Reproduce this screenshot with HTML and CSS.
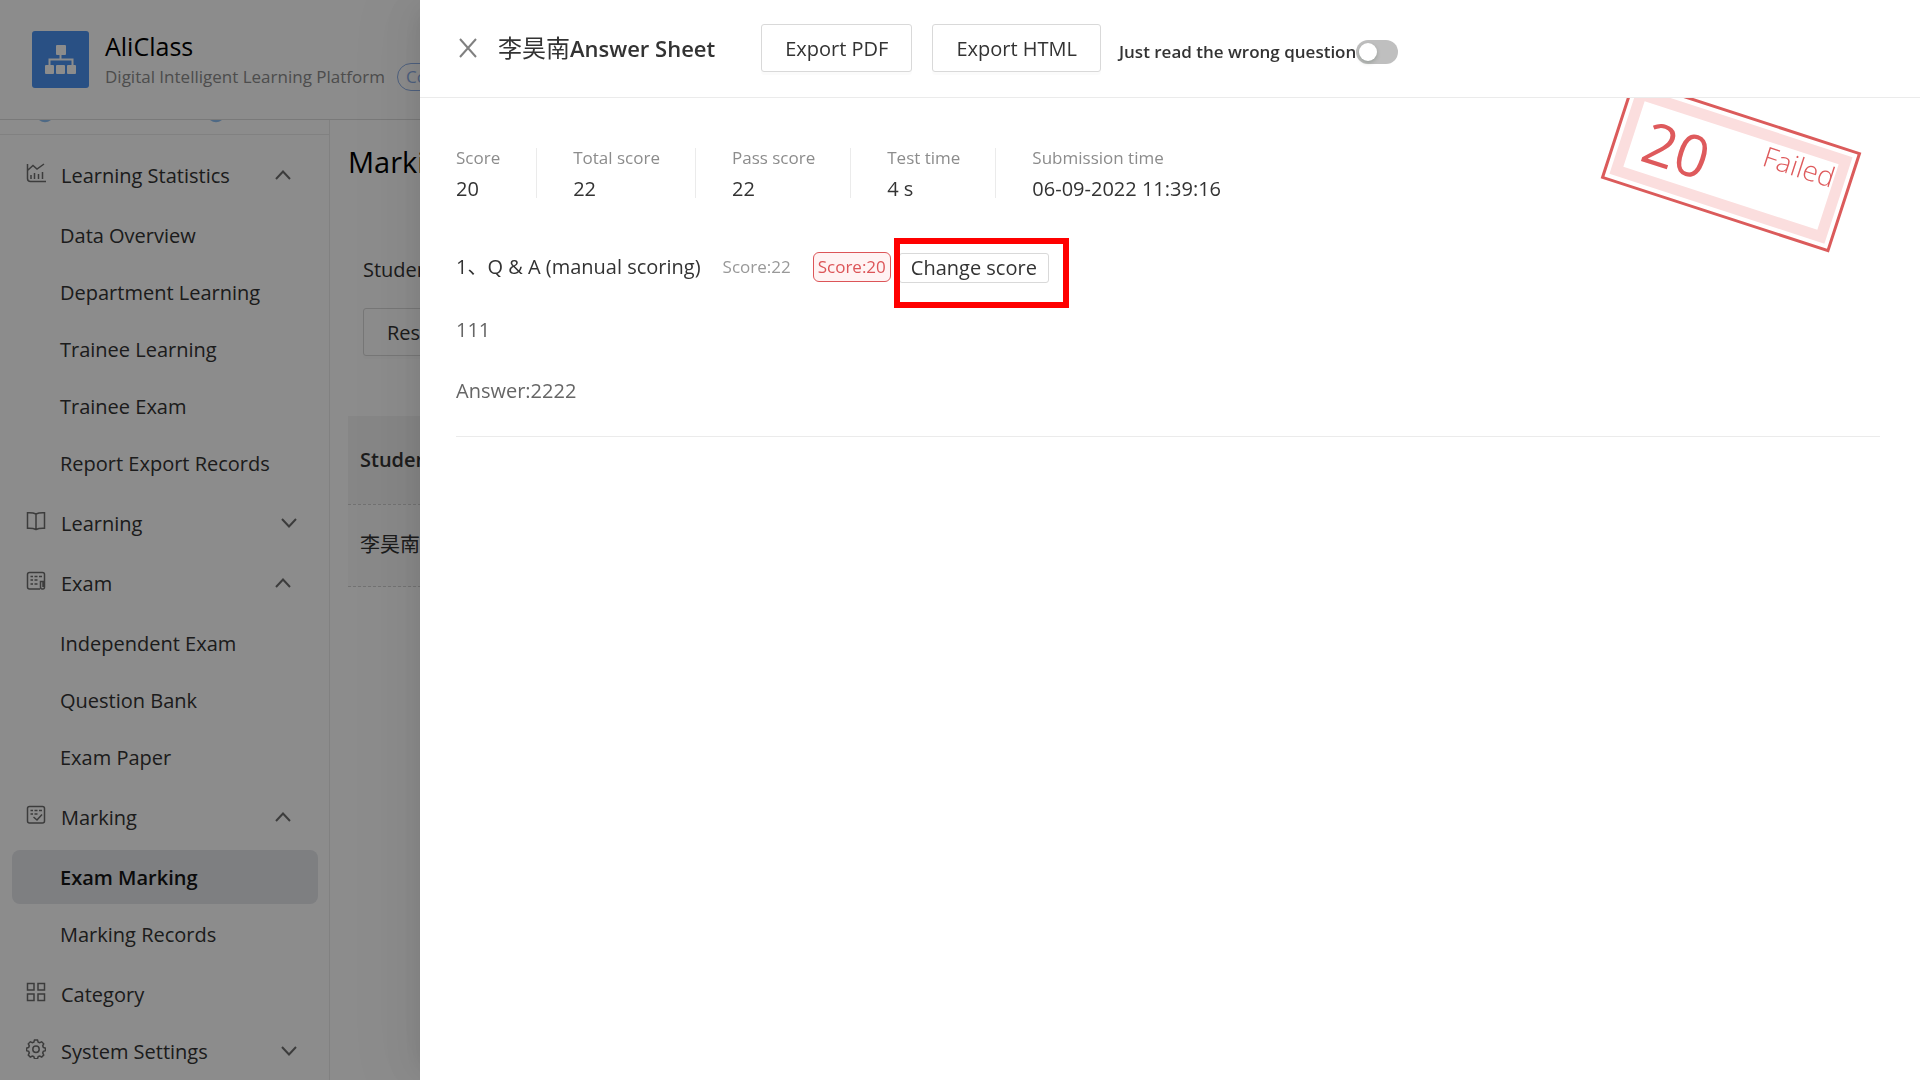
FILE: index.html
```html
<!DOCTYPE html>
<html lang="en">
<head>
    <meta charset="UTF-8">
    <meta name="viewport" content="width=device-width, initial-scale=1.0">
    <title>AliClass - Exam Marking</title>
    <link rel="stylesheet" href="styles.css">
</head>
<body>
<div class="app">
    <header class="topbar">
        <svg class="logo" viewBox="0 0 57 57" aria-hidden="true">
            <rect width="57" height="57" rx="3" fill="#4b92f0"/>
            <g fill="#fff">
                <rect x="24" y="14" width="10" height="10" rx="1"/>
                <rect x="13" y="34" width="9" height="9" rx="1"/>
                <rect x="24" y="34" width="9" height="9" rx="1"/>
                <rect x="35" y="34" width="9" height="9" rx="1"/>
            </g>
            <path d="M28.500 23v5M17.500 35v-6.500h23V35" fill="none" stroke="#fff" stroke-width="2"/>
        </svg>
        <div class="brand">
            <div class="brand-name">AliClass</div>
            <div class="brand-sub">
                <span>Digital Intelligent Learning Platform</span>
                <span class="badge">Corporate</span>
            </div>
        </div>
    </header>

    <div class="layout">
        <nav class="sidebar">
            <div class="shortcuts">
                <svg viewBox="0 0 12 3" aria-hidden="true"><path d="M0 0h12Q6 4.500 0 0z" fill="#8fc0f2"/></svg>
                <svg viewBox="0 0 12 3" aria-hidden="true"><path d="M0 0h12Q6 4.500 0 0z" fill="#8fc0f2"/></svg>
            </div>
            <ul class="menu">
                <li>
                    <button type="button" class="menu-title open">
                        <svg class="icon" viewBox="0 0 20 20"><path d="M1.500 1v14.500q0 3 3 3H20M2 7l5-4.500 4 3.500 7-5M5 16v-4M8.500 16v-6M12.500 16v-5M16.500 16V9"/></svg>
                        <span>Learning Statistics</span>
                        <svg class="chevron" viewBox="0 0 16 10"><path d="M1 9l7-7.500L15 9"/></svg>
                    </button>
                    <ul class="submenu">
                        <li><a href="#">Data Overview</a></li>
                        <li><a href="#">Department Learning</a></li>
                        <li><a href="#">Trainee Learning</a></li>
                        <li><a href="#">Trainee Exam</a></li>
                        <li><a href="#">Report Export Records</a></li>
                    </ul>
                </li>
                <li>
                    <button type="button" class="menu-title closed">
                        <svg class="icon" viewBox="0 0 20 20"><path d="M10 3q-3-1.500-8.500-1.200v15.500q5.500-.3 8.500 1.200 3-1.500 8.500-1.200V1.800Q13 1.500 10 3zM10 3v15"/></svg>
                        <span>Learning</span>
                        <svg class="chevron" viewBox="0 0 16 10"><path d="M1 1l7 7.500L15 1"/></svg>
                    </button>
                </li>
                <li>
                    <button type="button" class="menu-title open">
                        <svg class="icon" viewBox="0 0 20 20"><path d="M14 18H3.500q-2 0-2-2V3.500q0-2 2-2h13q2 0 2 2V16q0 2-1.500 2h-1q-1.500 0-1.500-2v-5.500h2.500V16M4.500 5.500h2.500M8.500 5.500h3M13 5.500h3M4.500 9h2.500M8.500 9h3M4.500 13h2.500M8.500 13h3"/></svg>
                        <span>Exam</span>
                        <svg class="chevron" viewBox="0 0 16 10"><path d="M1 9l7-7.500L15 9"/></svg>
                    </button>
                    <ul class="submenu">
                        <li><a href="#">Independent Exam</a></li>
                        <li><a href="#">Question Bank</a></li>
                        <li><a href="#">Exam Paper</a></li>
                    </ul>
                </li>
                <li>
                    <button type="button" class="menu-title open">
                        <svg class="icon" viewBox="0 0 20 20"><path d="M3.500 1.500h13q2 0 2 2v12.500q0 2-2 2h-13q-2 0-2-2V3.500q0-2 2-2zM4.500 5.500h2.500M8.500 5.500h3M13 5.500h3M4.500 9h2.500M8.500 9h3M7.500 12l3.500 3 5-5.500"/></svg>
                        <span>Marking</span>
                        <svg class="chevron" viewBox="0 0 16 10"><path d="M1 9l7-7.500L15 9"/></svg>
                    </button>
                    <ul class="submenu">
                        <li><a href="#" class="active">Exam Marking</a></li>
                        <li><a href="#">Marking Records</a></li>
                    </ul>
                </li>
                <li>
                    <a href="#" class="menu-title single">
                        <svg class="icon" viewBox="0 0 20 20"><path d="M1.500 1.500h6.500v6.500H1.500zM12 1.500h6.500v6.500H12zM1.500 12h6.500v6.500H1.500zM12 12h6.500v6.500H12z"/></svg>
                        <span>Category</span>
                    </a>
                </li>
                <li>
                    <button type="button" class="menu-title closed">
                        <svg class="icon" viewBox="0 0 20 20"><path d="M8.500 1h3l.7 2.200 1.400.6 2.100-1 2 2-1 2.100.6 1.500 2.200.8v2.400l-2.200.8-.6 1.500 1 2.100-2 2-2.100-1-1.400.6-.7 2.200h-3l-.7-2.200-1.400-.6-2.100 1-2-2 1-2.100-.6-1.500L.5 11.600V9.200l2.200-.8.6-1.500-1-2.100 2-2 2.100 1 1.400-.6z"/><circle cx="10" cy="10.300" r="3.200"/></svg>
                        <span>System Settings</span>
                        <svg class="chevron" viewBox="0 0 16 10"><path d="M1 1l7 7.500L15 1"/></svg>
                    </button>
                </li>
            </ul>
        </nav>

        <main class="content">
            <h1>Marking</h1>
            <div class="filters">
                <span class="filter-label">Student</span>
                <button type="button" class="btn">Reset</button>
            </div>
            <table class="list">
                <thead>
                <tr><th>Student</th></tr>
                </thead>
                <tbody>
                <tr><td>李昊南</td></tr>
                </tbody>
            </table>
        </main>
    </div>
</div>

<div class="mask"></div>

<section class="drawer" role="dialog" aria-labelledby="drawerTitle">
    <header class="drawer-header">
        <button type="button" class="close" aria-label="Close">
            <svg viewBox="0 0 18 20"><path d="M1 1l16 18M17 1L1 19"/></svg>
        </button>
        <h2 id="drawerTitle"><span class="student">李昊南</span>Answer Sheet</h2>
        <div class="actions">
            <button type="button" class="btn">Export PDF</button>
            <button type="button" class="btn">Export HTML</button>
        </div>
        <div class="toggle">
            <label for="wrongOnly">Just read the wrong question</label>
            <input type="checkbox" role="switch" id="wrongOnly" class="switch">
        </div>
    </header>

    <div class="drawer-body">
        <dl class="stats">
            <div><dt>Score</dt><dd>20</dd></div>
            <div><dt>Total score</dt><dd>22</dd></div>
            <div><dt>Pass score</dt><dd>22</dd></div>
            <div><dt>Test time</dt><dd>4 s</dd></div>
            <div><dt>Submission time</dt><dd>06-09-2022 11:39:16</dd></div>
        </dl>

        <div class="stamp">
            <div class="stamp-inner">
                <span class="stamp-score">20</span>
                <span class="stamp-result">Failed</span>
            </div>
        </div>

        <article class="question">
            <div class="question-head">
                <h3>1、Q &amp; A (manual scoring)</h3>
                <span class="full-score">Score:22</span>
                <span class="tag">Score:20</span>
                <div class="change">
                    <button type="button" class="btn-small">Change score</button>
                    <span class="highlight"></span>
                </div>
            </div>
            <p>111</p>
            <p>Answer:2222</p>
        </article>
    </div>
</section>
</body>
</html>
```
FILE: styles.css
```css
* {
    box-sizing: border-box;
}
body {
    margin: 0;
    height: 100vh;
    overflow: hidden;
    background: #fff;
    color: #333;
    font-family: "Open Sans", "Noto Sans CJK SC", sans-serif;
    font-size: 20px;
    line-height: 30px;
}
button {
    font: inherit;
    color: inherit;
    cursor: pointer;
}
h1, h2, h3, p, dl, dd, ul {
    margin: 0;
    padding: 0;
}
ul {
    list-style: none;
}
a {
    color: inherit;
    text-decoration: none;
}
.app {
    display: flex;
    flex-direction: column;
    height: 100%;
}

/* top bar */
.topbar {
    display: flex;
    align-items: center;
    gap: 16px;
    flex: none;
    height: 120px;
    padding: 0 32px;
    border-bottom: 1px solid #dcdcdc;
}
.logo {
    width: 57px;
    height: 57px;
}
.brand-name {
    color: #000;
    font-size: 25px;
    line-height: 34px;
}
.brand-sub {
    display: flex;
    align-items: center;
    gap: 12px;
    color: #8c8c8c;
    font-size: 17px;
    line-height: 28px;
    white-space: nowrap;
}
.badge {
    padding: 0 8px;
    border: 1px solid #8fb0e8;
    border-radius: 14px;
    color: #8fb0e8;
    line-height: 26px;
}

/* sidebar */
.layout {
    display: flex;
    flex: 1;
    min-height: 0;
}
.sidebar {
    flex: none;
    width: 330px;
    overflow: hidden;
    border-right: 1px solid #ebebeb;
}
.shortcuts {
    display: flex;
    gap: 159px;
    height: 15px;
    padding-left: 39px;
    border-bottom: 1px solid #ebebeb;
}
.shortcuts svg {
    width: 12px;
    height: 3px;
}
.menu {
    padding: 13px 11px 0 12px;
}
.menu-title {
    display: flex;
    align-items: center;
    gap: 15px;
    width: 100%;
    height: 54px;
    margin-bottom: 6px;
    padding: 0 16px 0 14px;
    border: 0;
    background: none;
    text-align: left;
}
.menu-title span {
    flex: 1;
    padding-top: 1px;
}
.menu-title.open {
    padding-right: 27px;
}
.menu-title.closed {
    padding-right: 21px;
}
.menu-title.single {
    margin-bottom: 3px;
}
.icon {
    width: 20px;
    height: 20px;
    margin-bottom: 4px;
    fill: none;
    stroke: #6e6e6e;
    stroke-width: 1.500;
}
.chevron {
    width: 16px;
    height: 10px;
    fill: none;
    stroke: #6e6e6e;
    stroke-width: 2;
}
.submenu {
    padding-bottom: 3px;
}
.submenu a {
    display: block;
    height: 54px;
    margin-bottom: 3px;
    padding-left: 48px;
    border-radius: 8px;
    line-height: 56px;
}
.submenu .active {
    background: #e5e7ec;
    color: #141414;
    font-weight: 600;
}

/* page behind the drawer */
.content {
    flex: 1;
    padding: 20px 18px;
}
.content h1 {
    color: #000;
    font-size: 29px;
    font-weight: 400;
    line-height: 44px;
}
.filters {
    display: flex;
    flex-direction: column;
    align-items: flex-start;
    gap: 23px;
    padding: 71px 15px 60px;
}
.btn {
    height: 48px;
    padding: 2px 23px 0;
    border: 1px solid #d9d9d9;
    border-radius: 3px;
    background: #fff;
    box-shadow: 0 3px 0 rgba(0, 0, 0, 0.015);
    white-space: nowrap;
}
.list {
    width: 100%;
    border-collapse: collapse;
    background: #f9f9f9;
}
.list th,
.list td {
    padding: 0 12px;
    border-bottom: 1px dashed #d0d0d0;
    text-align: left;
}
.list th {
    height: 88px;
    background: #f4f4f4;
    font-weight: 600;
}
.list td {
    height: 82px;
}

/* overlay */
.mask {
    position: fixed;
    inset: 0;
    background: rgba(0, 0, 0, 0.45);
}
.drawer {
    position: fixed;
    top: 0;
    right: 0;
    bottom: 0;
    left: 420px;
    display: flex;
    flex-direction: column;
    background: #fff;
    box-shadow: -8px 0 22px -10px rgba(0, 0, 0, 0.08), -12px 0 40px rgba(0, 0, 0, 0.05), -16px 0 68px 22px rgba(0, 0, 0, 0.03);
}
.drawer-header {
    display: flex;
    align-items: center;
    flex: none;
    height: 98px;
    padding: 0 36px 2px;
    border-bottom: 1px solid #ebebeb;
}
.close {
    display: flex;
    margin-right: 18px;
    padding: 0 3px;
    border: 0;
    background: none;
}
.close svg {
    width: 18px;
    height: 20px;
    fill: none;
    stroke: #808080;
    stroke-width: 2;
}
.drawer-header h2 {
    font-size: 22px;
    font-weight: 600;
}
.student {
    font-size: 24px;
    font-weight: 400;
}
.actions {
    display: flex;
    gap: 20px;
    margin: 0 18px 0 46px;
}
.toggle {
    display: flex;
    align-items: center;
    padding-top: 8px;
    font-size: 17px;
    font-weight: 600;
}
.switch {
    display: flex;
    align-items: center;
    width: 42px;
    height: 24px;
    margin: 0;
    padding: 0 3px;
    border-radius: 12px;
    appearance: none;
    background: #bfbfbf;
    cursor: pointer;
}
.switch::before {
    content: "";
    width: 18px;
    height: 18px;
    border-radius: 50%;
    background: #fff;
    box-shadow: 0 2px 4px rgba(0, 35, 11, 0.2);
}
.switch:checked {
    justify-content: flex-end;
    background: #1890ff;
}
.drawer-body {
    position: relative;
    flex: 1;
    overflow: hidden;
    padding: 50px 40px 0 36px;
}
.stats {
    display: flex;
}
.stats div {
    padding: 0 35px 0 36px;
    border-left: 1px solid #ebebeb;
    line-height: 18px;
}
.stats div:first-child {
    padding: 0 36px 0 0;
    border-left: 0;
}
.stats dt {
    padding-bottom: 12px;
    color: #8c8c8c;
    font-size: 17px;
    line-height: 20px;
}

/* rotated result stamp */
.stamp {
    position: absolute;
    top: 15px;
    right: 69px;
    width: 240px;
    height: 105px;
    padding: 4px;
    border: 3px solid #db5b5b;
    transform: rotate(18deg);
}
.stamp-inner {
    display: flex;
    justify-content: space-between;
    height: 100%;
    padding: 0 0 0 12px;
    border: 11px solid #fbdede;
    color: #de5a5c;
}
.stamp-score {
    font-size: 58px;
    line-height: 72px;
}
.stamp-result {
    font-size: 28px;
    font-weight: 300;
    line-height: 28px;
}

/* answers */
.question {
    padding: 49px 0 30px;
    border-bottom: 1px solid #ebebeb;
}
.question-head {
    display: flex;
    align-items: center;
    height: 40px;
    margin-bottom: 28px;
}
.question h3 {
    font-size: 20px;
    font-weight: 400;
}
.full-score {
    margin: 0 22px;
    color: #999;
    font-size: 17px;
}
.tag {
    padding: 0 4px;
    border: 1px solid #dc5558;
    border-radius: 6px;
    background: #fff3f3;
    color: #dc5558;
    font-size: 17px;
    line-height: 28px;
}
.change {
    position: relative;
    margin-left: 8px;
    padding-top: 2px;
}
.btn-small {
    display: block;
    height: 30px;
    padding: 0 11px;
    border: 1px solid #d9d9d9;
    border-radius: 3px;
    background: #fff;
    line-height: 28px;
}
.highlight {
    position: absolute;
    inset: -13px -20px -25px -5px;
    border: 6px solid #f00;
    pointer-events: none;
}
.question p {
    margin-bottom: 31px;
    color: #666;
}
.question p:last-child {
    margin-bottom: 0;
}
```
